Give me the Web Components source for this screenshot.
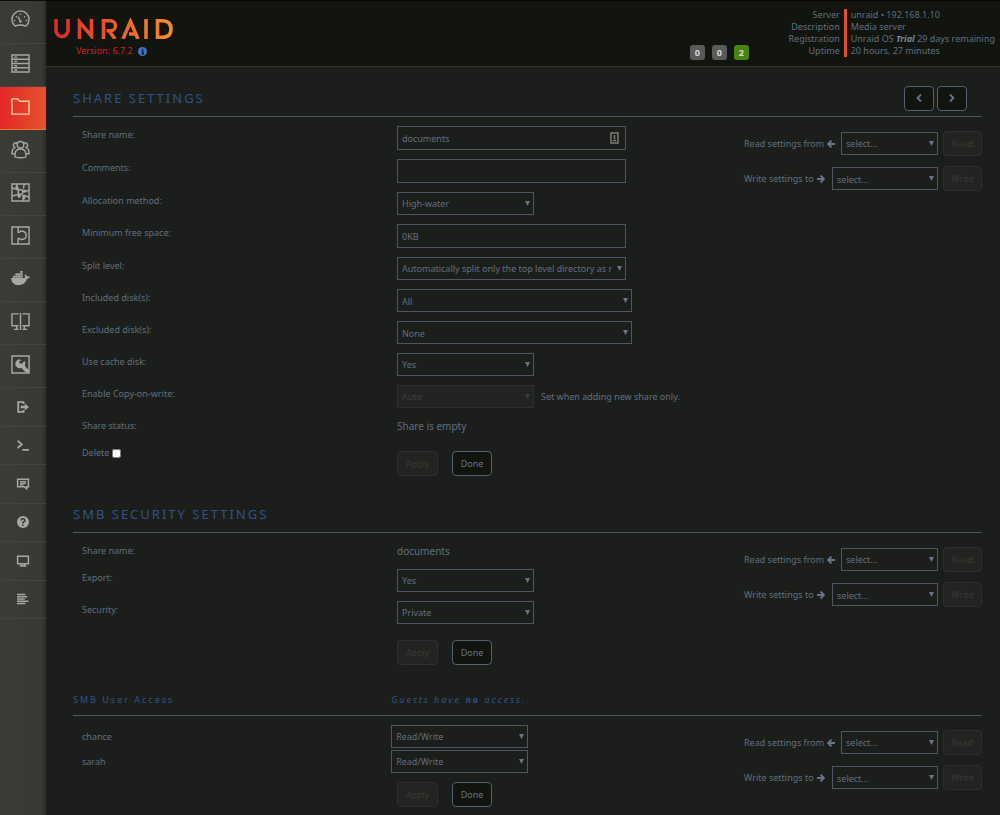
<!DOCTYPE html>
<html lang="en">
<head>
<meta charset="utf-8">
<title>Unraid/Share</title>
<style>
  body {
    margin: 0;
    min-height: 100vh;
    background: #1c1e1b;
    color: #606f81;
    font: 10px/18px "Noto Sans", "Liberation Sans", sans-serif;
    --line: #4b5763;
    --accent: #30528a;
    --small: 9px;
  }
</style>
</head>
<body>
<unraid-app></unraid-app>

<script>
function define(name, html, setup) {
  const template = document.createElement('template')
  template.innerHTML = html
  customElements.define(name, class extends HTMLElement {
    constructor() {
      super()
      this.attachShadow({ mode: 'open' })
      this.shadowRoot.appendChild(template.content.cloneNode(true))
    }

    connectedCallback() {
      if (setup && !this.ready) {
        this.ready = true
        setup(this, this.shadowRoot)
      }
    }
  })
}

const outline = `fill="none" stroke="currentColor" stroke-width="1.5"`

const icons = {
  dashboard: `<g ${outline}><path d="M4.500 16A9 9 0 1 1 15.500 16Q10 13.500 4.500 16z"/><path d="M10 11L7.500 6M3 10h1.500M5.200 5.500l1 1M10 2.500v1.500M14.800 5.500l-1 1M17 10h-1.500"/></g><circle cx="10" cy="11" r="1.300" fill="currentColor"/>`,
  main: `<g ${outline}><path d="M1 1h18v18H1zM1 5.500h18M1 10h18M1 14.500h18M3.500 3.300h3M3.500 7.800h3M3.500 12.300h3M3.500 16.800h3"/></g>`,
  shares: `<path ${outline} d="M1 2h6l2 2.500h10V18H1z"/>`,
  users: `<g ${outline}><circle cx="10" cy="5" r="3.500"/><path d="M6.500 3.500A2.500 2.500 0 1 0 5 8M13.500 3.500A2.500 2.500 0 1 1 15 8M4.500 18c-1-6 1-8.500 5.500-8.500s6.500 2.500 5.500 8.500q-5.500 1.500-11 0zM4.500 8C1.500 8.500 1 11 1 14.500h3M15.500 8c3 .5 3.500 3 3.500 6.500h-3"/></g>`,
  settings: `<g ${outline}><path d="M1 1h18v18H1z"/><path d="M1 5l5 2M6 1v5M19 8l-5 1M14 1l-1 5M1 14l6-2M19 15l-5-2M13 19v-4"/><circle cx="10" cy="9.500" r="2.500"/></g><path d="M4 4l3-1 2 4-3 1zM12 7h4v3h-4zM6 12l3-1 2 3-3 2zM12 12l3 1v4h-3z" fill="currentColor"/>`,
  plugins: `<path ${outline} d="M1 1h18v18H1zM7.500 1v5.500h2M7.500 19v-6h2M9.500 6.500q0-2 2-1h1q3.500 1 3.500 4.500t-3.500 4h-1q-2 1-2-1"/>`,
  docker: `<path fill="currentColor" d="M0 9.500h14.500q1-1-.2-3l.8-1q1.500.8 1.700 2.200 2-.3 3.200.5-.8 1.900-3 2-2.500 6.800-9.500 6.800Q.5 17 0 9.500zM2 7h2.400v2.300H2zM4.600 7H7v2.300H4.600zM7.200 7h2.400v2.300H7.200zM9.800 7h2.400v2.300H9.800zM4.600 4.500H7v2.300H4.600zM7.200 4.500h2.400v2.300H7.200zM9.800 4.500h2.400v2.300H9.800zM9.800 2h2.400v2.300H9.800z"/>`,
  vms: `<path ${outline} d="M8 14.500H1V2h7M12 14.500h7V2h-7M10 1v18M6 14.500V18M14 14.500V18M3 18.300h5M12 18.300h5"/>`,
  tools: `<path ${outline} d="M1 1h18v18H1z"/><path fill="currentColor" d="M11.500 5.500L8.300 4.400A5.200 5.200 0 0 0 5 11.500q2 3.200 6 2.300l4.500 4.700H19V16l-4.300-4.200q1.300-3.300-.5-5.800l-2.700 3.200-2.500-.6-.4-2.300z"/>`,
  logout: `<path fill="none" stroke="currentColor" stroke-width="3" d="M11 2H2v16h9M11 5V1M11 19v-4"/><path fill="currentColor" d="M6 8h7V4l7 6-7 6v-4H6z"/>`,
  terminal: `<path fill="none" stroke="currentColor" stroke-width="3" d="M1 3l7 6-7 6M9 18h11"/>`,
  feedback: `<path fill="none" stroke="currentColor" stroke-width="2.500" d="M1 2h18v12.500h-3V18l-4-3.500H1z"/><path stroke="currentColor" stroke-width="2" d="M5 6h10M5 8.800h10M5 11.500h6"/>`,
  help: `<circle cx="10" cy="10" r="10" fill="currentColor"/><path fill="none" stroke="#383a34" stroke-width="2.500" d="M6.500 7.500Q7 4.500 10 4.500t3.200 2.800Q13 9 11 10t-1 2.500M10 14v2.500"/>`,
  info: `<path fill="none" stroke="currentColor" stroke-width="2.500" d="M1 2h18v12.500H1zM7.500 14v4M12.500 14v4M4.500 18.500h11"/>`,
  log: `<path stroke="currentColor" stroke-width="2.500" d="M0 2.500h14M0 6.300h17M0 10h13M0 13.800h19M0 17.500h14"/>`
}

define('nav-item', `<style>
  :host {
    display: block;
    box-sizing: border-box;
    height: 43px;
    border-bottom: 1px solid #42443e;
    color: #a6a7a3;
  }

  :host([small]) {
    height: 39px;
  }

  :host([small]:nth-of-type(odd)) {
    height: 38px;
  }

  :host([active]) {
    background: linear-gradient(90deg, #e22828, #e8502c);
    border-color: #ee7a25;
    color: #f5cda6;
  }

  a {
    display: flex;
    box-sizing: border-box;
    height: 100%;
    align-items: center;
    justify-content: center;
    padding: 0 5px 3px 0;
    color: inherit;
  }

  :host([small]) a {
    padding: 0 0 1px;
  }

  svg {
    width: 19px;
    height: 19px;
    overflow: visible;
  }

  :host([small]) svg {
    width: 12px;
    height: 12px;
  }
</style>
<a href="#"><svg viewBox="0 0 20 20"></svg></a>
`, (el, root) => {
  root.querySelector('svg').innerHTML = icons[el.getAttribute('icon')]
  root.querySelector('a').setAttribute('aria-label', el.getAttribute('icon'))
})

define('side-nav', `<style>
  :host {
    display: block;
    background: linear-gradient(90deg, #3a3c36, #373933 90%, #2b2d28);
    border-top: 1px solid #0c0d0a;
  }
</style>
<nav><slot></slot></nav>
`)

define('info-line', `<style>
  :host {
    display: grid;
    grid-template-columns: 60px auto;
  }

  .name {
    text-align: right;
    padding-right: 4px;
    border-right: 3px solid #e2522a;
  }

  .value {
    padding-left: 4px;
  }
</style>
<span class="name"></span>
<span class="value"><slot></slot></span>
`, (el, root) => {
  root.querySelector('.name').textContent = el.getAttribute('name')
})

define('count-badge', `<style>
  :host {
    display: block;
    width: 15px;
    border-radius: 3px;
    background: #5a5a5a;
    color: #d8d8d8;
    font-weight: bold;
    line-height: 15px;
    text-align: center;
  }

  :host([green]) {
    background: #4a8410;
  }
</style>
<slot></slot>
`)

define('page-header', `<style>
  :host {
    display: flex;
    box-sizing: border-box;
    height: 67px;
    justify-content: space-between;
    border-top: 1px solid #060705;
    border-bottom: 1px solid #333633;
    background: #12140f;
    font-size: var(--small);
  }

  .brand {
    padding: 17px 0 0 8px;
  }

  .logo {
    display: block;
    width: 119px;
    height: 21px;
  }

  .version {
    display: flex;
    align-items: center;
    gap: 5px;
    padding: 3px 0 0 22px;
    color: #d42020;
  }

  .version svg {
    width: 9px;
    height: 9px;
  }

  .right {
    display: flex;
    align-items: flex-start;
    gap: 38px;
    padding: 8px 5px 0 0;
    line-height: 12px;
  }

  .badges {
    display: flex;
    gap: 7px;
    padding-top: 36px;
  }

  strong {
    color: #76869a;
  }
</style>
<div class="brand">
  <svg class="logo" viewBox="0 0 119 21" role="img" aria-label="UNRAID">
    <defs>
      <linearGradient id="flame" gradientUnits="userSpaceOnUse" x1="0" y1="0" x2="119" y2="0">
        <stop offset="0" stop-color="#dd2a2c"/>
        <stop offset="1" stop-color="#f68c2c"/>
      </linearGradient>
    </defs>
    <g fill="none" stroke="url(#flame)" stroke-width="3.600">
      <path d="M2 1v11.500a6 6 0 0 0 12 0V1"/>
      <path d="M25.500 21V4l12 14V1"/>
      <path d="M49.500 21V2.700h7a4.500 4.500 0 0 1 0 10h-4M55 12.500l6 8.500"/>
      <path d="M69 21l7.500-17.500L84 21M75 16h7"/>
      <path d="M92 1l.01 20"/>
      <path d="M103.500 2.700h5q8.500 0 8.500 8.300t-8.500 8.300h-5z"/>
    </g>
  </svg>
  <div class="version">Version: 6.7.2
    <svg viewBox="0 0 10 10"><circle cx="5" cy="5" r="5" fill="#4670c8"/><path d="M4 4.500h1.500v3M3.800 7.600h3M5 2v1.400" stroke="#12140f" stroke-width="1.300" fill="none"/></svg>
  </div>
</div>
<div class="right">
  <div class="badges">
    <count-badge>0</count-badge>
    <count-badge>0</count-badge>
    <count-badge green>2</count-badge>
  </div>
  <div>
    <info-line name="Server">unraid • 192.168.1.10</info-line>
    <info-line name="Description">Media server</info-line>
    <info-line name="Registration">Unraid OS <strong><em>Trial</em></strong> 29 days remaining</info-line>
    <info-line name="Uptime">20 hours, 27 minutes</info-line>
  </div>
</div>
`)

define('push-button', `<style>
  :host {
    display: block;
  }

  button {
    display: flex;
    align-items: center;
    justify-content: center;
    box-sizing: border-box;
    width: 100%;
    height: 25px;
    padding: 0;
    border: 1px solid #536270;
    border-radius: 4px;
    background: #12140f;
    color: #66758a;
    font: inherit;
    font-size: var(--small);
  }

  button:disabled {
    border-color: #2f2f2d;
    background: #232321;
    color: #393a39;
  }
</style>
<button type="button"><slot></slot></button>
`, (el, root) => {
  root.querySelector('button').disabled = el.hasAttribute('disabled')
  if (el.hasAttribute('label')) {
    root.querySelector('button').setAttribute('aria-label', el.getAttribute('label'))
  }
})

define('drop-down', `<style>
  :host {
    display: block;
    position: relative;
    width: 137px;
  }

  :host([size=wide]) {
    width: 229px;
  }

  :host([size=multi]) {
    width: 235px;
  }

  :host([size=read]) {
    width: 97px;
  }

  :host([size=write]) {
    width: 106px;
  }

  select {
    display: block;
    appearance: none;
    box-sizing: border-box;
    width: 100%;
    height: 23px;
    margin: 0;
    padding: 0 13px 0 4px;
    border: 1px solid var(--line);
    border-radius: 0;
    background: transparent;
    color: inherit;
    font: inherit;
    font-size: var(--small);
    opacity: 1;
  }

  :host([size=multi]) select, :host([size=write]) select {
    padding-top: 2px;
  }

  select:disabled {
    border-color: #2f2f2d;
    background: #232321;
    color: #393d40;
  }

  svg {
    position: absolute;
    top: 9px;
    right: 4px;
    width: 5px;
    height: 5px;
    color: #66758a;
    pointer-events: none;
  }

  :host([disabled]) svg {
    color: #393d40;
  }
</style>
<select><option></option></select>
<svg viewBox="0 0 5 5"><path d="M0 0h5L2.500 5z" fill="currentColor"/></svg>
`, (el, root) => {
  root.querySelector('option').textContent = el.getAttribute('value')
  root.querySelector('select').disabled = el.hasAttribute('disabled')
  root.querySelector('select').setAttribute('aria-label', el.getAttribute('label') || '')
})

define('text-field', `<style>
  :host {
    display: block;
    position: relative;
    width: 229px;
  }

  input {
    display: block;
    box-sizing: border-box;
    width: 100%;
    height: 24px;
    margin: 0;
    padding: 0 4px;
    border: 1px solid var(--line);
    background: transparent;
    color: inherit;
    font: inherit;
    font-size: var(--small);
  }

  svg {
    display: none;
    position: absolute;
    top: 6px;
    right: 7px;
    width: 9px;
    height: 12px;
  }

  :host([autofill]) svg {
    display: block;
  }
</style>
<input type="text">
<svg viewBox="0 0 9 12"><path d="M1 1h7v10H1z" fill="none" stroke="#7c7c7a" stroke-width="1.500"/><path d="M4.500 3v4M3 8.500h3" stroke="#7c7c7a" stroke-width="1.500"/></svg>
`, (el, root) => {
  root.querySelector('input').value = el.getAttribute('value') || ''
  root.querySelector('input').setAttribute('aria-label', el.getAttribute('label') || '')
})

define('form-row', `<style>
  :host {
    display: grid;
    grid-template-columns: 35% 1fr;
    align-items: start;
    padding-left: 9px;
  }

  :host([user]) {
    align-items: center;
    padding-left: 0;
  }

  .name {
    display: flex;
    align-items: center;
    gap: 3px;
    font-size: var(--small);
  }

  :host([user]) .name {
    padding-left: 9px;
  }

  .value {
    display: flex;
    align-items: center;
    gap: 7px;
  }

  :host([actions]) .value {
    padding-top: 7px;
  }

  input {
    width: 9px;
    height: 9px;
    margin: 0;
  }
</style>
<label class="name"></label>
<div class="value"><slot></slot></div>
`, (el, root) => {
  const label = root.querySelector('label')
  const name = el.getAttribute('name') || ''
  label.textContent = name
  if (el.hasAttribute('check')) {
    const box = document.createElement('input')
    box.type = 'checkbox'
    label.appendChild(box)
  }
  // a label can't point into another shadow root, so the control gets the name too
  const control = el.querySelector('drop-down, text-field')
  if (control) {
    control.setAttribute('label', name)
    label.addEventListener('click', () => {
      control.shadowRoot.querySelector('select, input').focus()
    })
  }
})

define('form-actions', `<style>
  :host {
    display: flex;
    gap: 14px;
  }

  .apply {
    width: 41px;
  }

  .done {
    width: 40px;
  }
</style>
<push-button class="apply" disabled>Apply</push-button>
<push-button class="done">Done</push-button>
`)

define('copy-settings', `<style>
  :host {
    display: grid;
    gap: 10px;
    width: 238px;
    font-size: var(--small);
  }

  .row {
    display: flex;
    align-items: center;
    gap: 5px;
  }

  .text {
    display: flex;
    flex: 1;
    align-items: center;
    gap: 3px;
    white-space: nowrap;
  }

  svg {
    width: 8px;
    height: 8px;
  }

  push-button {
    width: 39px;
  }
</style>
<div class="row">
  <span class="text">Read settings from
    <svg viewBox="0 0 8 8"><path d="M8 4H1.500M4.500.5L1 4l3.500 3.500" fill="none" stroke="#66758a" stroke-width="1.800"/></svg>
  </span>
  <drop-down size="read" value="select..." label="Read settings from"></drop-down>
  <push-button disabled>Read</push-button>
</div>
<div class="row">
  <span class="text">Write settings to
    <svg viewBox="0 0 8 8"><path d="M0 4h6.500M3.500.5L7 4 3.500 7.500" fill="none" stroke="#66758a" stroke-width="1.800"/></svg>
  </span>
  <drop-down size="write" value="select..." label="Write settings to"></drop-down>
  <push-button disabled>Write</push-button>
</div>
`)

define('settings-section', `<style>
  :host {
    display: block;
  }

  header {
    display: grid;
    grid-template-columns: 35% 1fr auto;
    align-items: center;
    height: 32px;
    box-sizing: border-box;
    padding: 0 15px 5px 0;
    border-bottom: 1px solid var(--line);
    color: var(--accent);
    letter-spacing: 2px;
  }

  h2 {
    margin: 0;
    font-size: 13px;
    font-weight: normal;
    white-space: nowrap;
  }

  :host([minor]) header {
    height: 26px;
    padding-right: 0;
  }

  :host([minor]) h2 {
    font-size: var(--small);
  }

  .note {
    font-size: var(--small);
    font-style: italic;
  }

  .body {
    display: grid;
    padding-top: 9px;
  }

  .form, copy-settings {
    grid-area: 1 / 1;
  }

  .form {
    display: grid;
    gap: 9px;
  }

  :host([minor]) .form {
    gap: 2px;
  }

  copy-settings {
    justify-self: end;
    align-self: start;
    margin-top: 5px;
  }
</style>
<header>
  <h2></h2>
  <div class="note"><slot name="note"></slot></div>
  <slot name="tools"></slot>
</header>
<div class="body">
  <div class="form"><slot></slot></div>
  <copy-settings></copy-settings>
</div>
`, (el, root) => {
  root.querySelector('h2').textContent = el.getAttribute('heading')
})

define('pager-buttons', `<style>
  :host {
    display: flex;
    gap: 3px;
  }

  push-button {
    width: 30px;
  }

  svg {
    width: 6px;
    height: 8px;
  }
</style>
<push-button label="Previous share"><svg viewBox="0 0 6 8"><path d="M5 .5L1.500 4 5 7.500" fill="none" stroke="currentColor" stroke-width="1.800"/></svg></push-button>
<push-button label="Next share"><svg viewBox="0 0 6 8"><path d="M1 .5L4.500 4 1 7.500" fill="none" stroke="currentColor" stroke-width="1.800"/></svg></push-button>
`)

define('unraid-app', `<style>
  :host {
    display: grid;
    grid-template-columns: 46px 1fr;
    min-height: 100vh;
  }

  main {
    display: grid;
    gap: 25px;
    padding: 18px 18px 6px 27px;
  }

  .small {
    font-size: var(--small);
  }
</style>
<side-nav>
  <nav-item icon="dashboard"></nav-item>
  <nav-item icon="main"></nav-item>
  <nav-item icon="shares" active></nav-item>
  <nav-item icon="users"></nav-item>
  <nav-item icon="settings"></nav-item>
  <nav-item icon="plugins"></nav-item>
  <nav-item icon="docker"></nav-item>
  <nav-item icon="vms"></nav-item>
  <nav-item icon="tools"></nav-item>
  <nav-item icon="logout" small></nav-item>
  <nav-item icon="terminal" small></nav-item>
  <nav-item icon="feedback" small></nav-item>
  <nav-item icon="help" small></nav-item>
  <nav-item icon="info" small></nav-item>
  <nav-item icon="log" small></nav-item>
</side-nav>
<div>
  <page-header></page-header>
  <main>
    <settings-section heading="SHARE SETTINGS">
      <pager-buttons slot="tools"></pager-buttons>
      <form-row name="Share name:"><text-field value="documents" autofill></text-field></form-row>
      <form-row name="Comments:"><text-field></text-field></form-row>
      <form-row name="Allocation method:"><drop-down value="High-water"></drop-down></form-row>
      <form-row name="Minimum free space:"><text-field value="0KB"></text-field></form-row>
      <form-row name="Split level:"><drop-down size="wide" value="Automatically split only the top level directory as required"></drop-down></form-row>
      <form-row name="Included disk(s):"><drop-down size="multi" value="All"></drop-down></form-row>
      <form-row name="Excluded disk(s):"><drop-down size="multi" value="None"></drop-down></form-row>
      <form-row name="Use cache disk:"><drop-down value="Yes"></drop-down></form-row>
      <form-row name="Enable Copy-on-write:"><drop-down value="Auto" disabled></drop-down><span class="small">Set when adding new share only.</span></form-row>
      <form-row name="Share status:"><span>Share is empty</span></form-row>
      <form-row name="Delete" check actions><form-actions></form-actions></form-row>
    </settings-section>

    <settings-section heading="SMB SECURITY SETTINGS">
      <form-row name="Share name:"><span>documents</span></form-row>
      <form-row name="Export:"><drop-down value="Yes"></drop-down></form-row>
      <form-row name="Security:"><drop-down value="Private"></drop-down></form-row>
      <form-row actions><form-actions></form-actions></form-row>
    </settings-section>

    <settings-section heading="SMB User Access" minor>
      <span slot="note">Guests have <b>no</b> access.</span>
      <form-row name="chance" user><drop-down value="Read/Write"></drop-down></form-row>
      <form-row name="sarah" user><drop-down value="Read/Write"></drop-down></form-row>
      <form-row actions><form-actions></form-actions></form-row>
    </settings-section>
  </main>
</div>
`)
</script>
</body>
</html>
